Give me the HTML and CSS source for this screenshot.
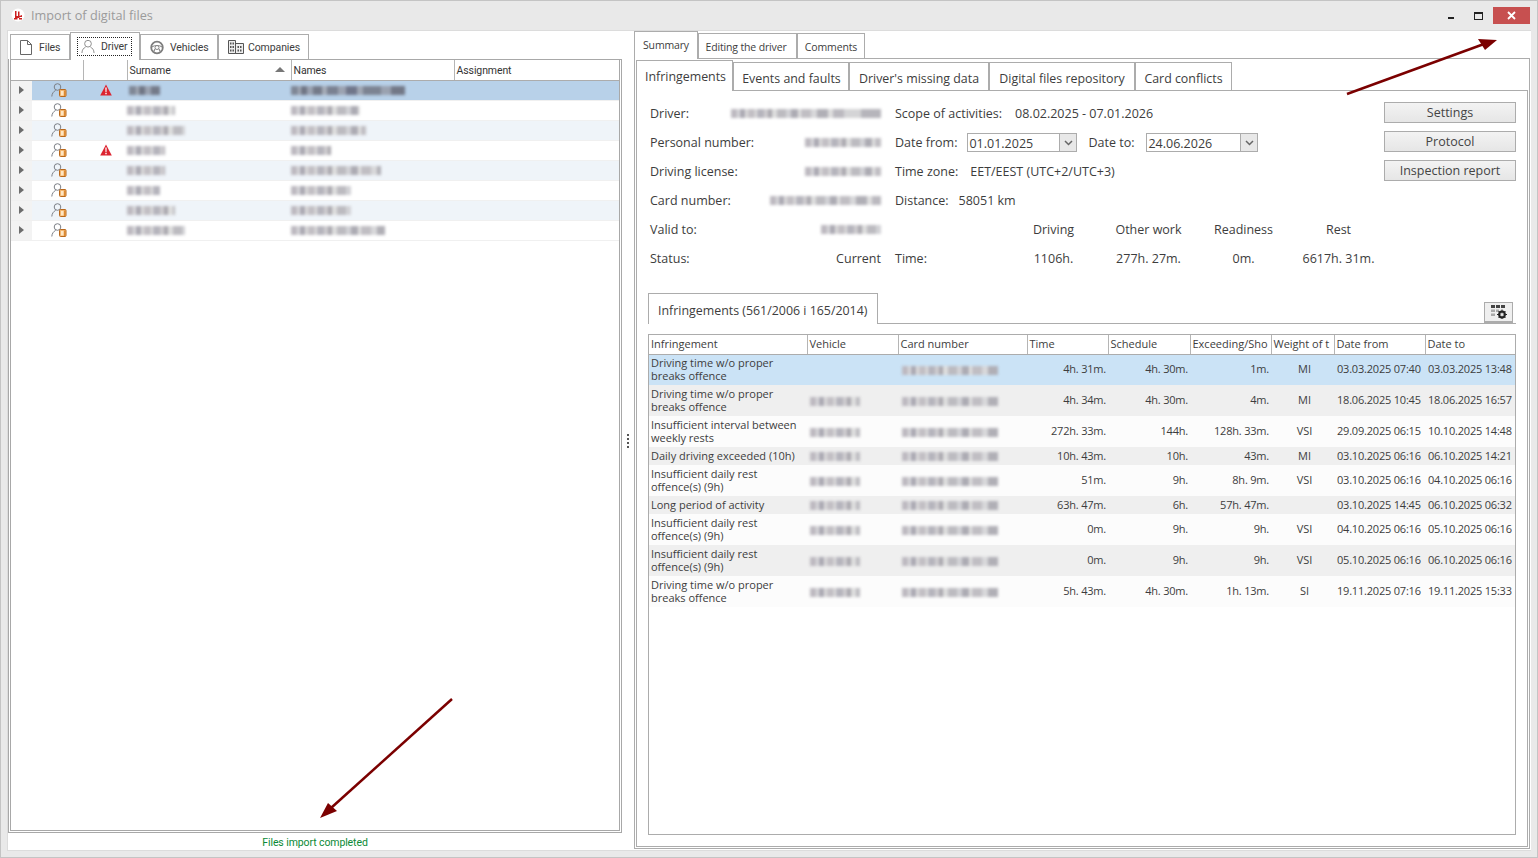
FILE: index.html
```html
<!DOCTYPE html>
<html lang="en">
<head>
    <meta charset="utf-8">
    <meta name="viewport" content="width=device-width, initial-scale=1">
    <link rel="stylesheet" href="styles.css">
    <title>Import of digital files</title>
</head>
<body>
    <svg class="defs" width="0" height="0">
        <symbol id="user-db" viewBox="0 0 16 14">
            <circle cx="6.500" cy="4" r="3.300" fill="none" stroke="#7c7f86" stroke-width="1"/>
            <path d="M0.800 13.500C1 10.500 2.500 8.500 4.600 7.400" fill="none" stroke="#7c7f86" stroke-width="1"/>
            <rect x="8.500" y="6.500" width="6.500" height="7" rx="1" fill="#f2b56f" stroke="#b9681c" stroke-width="1"/>
            <rect x="10" y="8" width="2.500" height="4.500" fill="#fde6c4"/>
            <rect x="13" y="7.500" width="1.300" height="5.500" fill="#de8a30"/>
        </symbol>
        <symbol id="warn" viewBox="0 0 12 12">
            <path d="M6 .5L11.800 11.500H.2z" fill="#dc2330"/>
            <path d="M5.300 3.600h1.400l-.2 4.400h-1zM5.300 8.800h1.400v1.400H5.300z" fill="#fff"/>
        </symbol>
    </svg>

    <div class="window">
        <div class="titlebar">
            <svg class="app-icon" viewBox="0 0 14 14">
                <circle cx="7" cy="7" r="6.500" fill="#fff"/>
                <path d="M4 3h1.500v5H7V3.500h1.500V8L11 7v2H8.500V10H11v1.500H8V10H6.500v1.500H3V10h1z" fill="#cc1f1f"/>
            </svg>
            <span class="title">Import of digital files</span>
            <div class="win-controls">
                <span class="win-min"></span>
                <span class="win-max"></span>
                <span class="win-close">
                    <svg viewBox="0 0 9 9" width="9" height="9"><path d="M1 1l7 7M8 1L1 8" stroke="#fff" stroke-width="1.800"/></svg>
                </span>
            </div>
        </div>

        <div class="content">
            <div class="left-pane">
                <div class="tabs left-tabs">
                    <div class="tab">
                        <svg class="tab-icon" viewBox="0 0 14 15"><path d="M1.500 .5h7l4 4v10h-11zM8.500 .5v4h4" fill="none" stroke="#666" stroke-width="1"/></svg>
                        Files
                    </div>
                    <div class="tab active">
                        <span class="focus">
                            <svg class="tab-icon" viewBox="0 0 15 15"><circle cx="7.500" cy="4.500" r="3.600" fill="none" stroke="#888" stroke-width="1"/><path d="M1 14.500c0-3.500 2-5.500 3.800-6.300M14 14.500c0-3.500-2-5.500-3.800-6.300" fill="none" stroke="#888" stroke-width="1"/></svg>
                            Driver
                        </span>
                    </div>
                    <div class="tab">
                        <svg class="tab-icon" viewBox="0 0 14 14"><circle cx="7" cy="7" r="5.800" fill="none" stroke="#7d7d7d" stroke-width="1.800"/><circle cx="7" cy="7" r="2" fill="none" stroke="#888" stroke-width="1"/><path d="M2 6.500C4 4.500 10 4.500 12 6.500M5 8.500l-1.500 3M9 8.500l1.500 3" fill="none" stroke="#888" stroke-width="1.200"/></svg>
                        Vehicles
                    </div>
                    <div class="tab">
                        <svg class="tab-icon wide" viewBox="0 0 16 14"><path d="M.5 .5h7v13h-7zM7.500 3.500h8v10h-8z" fill="#eee" stroke="#555" stroke-width="1"/><path d="M2 2.500h1.500v2H2zM4.500 2.500H6v2H4.500zM2 6h1.500v2H2zM4.500 6H6v2H4.500zM2 9.500h1.500v2H2zM4.500 9.500H6v2H4.500zM9.500 6h1.500v2H9.500zM12 6h1.500v2H12zM9.500 9.500h1.500v2H9.500zM12 9.500h1.500v2H12z" fill="#555"/></svg>
                        Companies
                    </div>
                </div>

                <div class="list-box">
                    <table class="drivers">
                        <colgroup>
                            <col class="c-arrow"><col class="c-icon"><col class="c-warn"><col class="c-name"><col class="c-name2"><col>
                        </colgroup>
                        <thead>
                            <tr>
                                <th colspan="2"></th>
                                <th></th>
                                <th class="sorted">Surname<span class="sort-up"></span></th>
                                <th>Names</th>
                                <th>Assignment</th>
                            </tr>
                        </thead>
                        <tbody>
                            <tr class="selected">
                                <td class="arrow-cell"><span class="arrow"></span></td>
                                <td class="icon-cell"><svg class="user-icon"><use href="#user-db"/></svg></td>
                                <td class="icon-cell"><svg class="warn-icon"><use href="#warn"/></svg></td>
                                <td><span class="blur dark w31"></span></td>
                                <td><span class="blur dark w114"></span></td>
                                <td></td>
                            </tr>
                            <tr>
                                <td class="arrow-cell"><span class="arrow"></span></td>
                                <td class="icon-cell"><svg class="user-icon"><use href="#user-db"/></svg></td>
                                <td></td>
                                <td><span class="blur w48"></span></td>
                                <td><span class="blur w69"></span></td>
                                <td></td>
                            </tr>
                            <tr class="alt">
                                <td class="arrow-cell"><span class="arrow"></span></td>
                                <td class="icon-cell"><svg class="user-icon"><use href="#user-db"/></svg></td>
                                <td></td>
                                <td><span class="blur w58"></span></td>
                                <td><span class="blur w75"></span></td>
                                <td></td>
                            </tr>
                            <tr>
                                <td class="arrow-cell"><span class="arrow"></span></td>
                                <td class="icon-cell"><svg class="user-icon"><use href="#user-db"/></svg></td>
                                <td class="icon-cell"><svg class="warn-icon"><use href="#warn"/></svg></td>
                                <td><span class="blur w38"></span></td>
                                <td><span class="blur w40"></span></td>
                                <td></td>
                            </tr>
                            <tr class="alt">
                                <td class="arrow-cell"><span class="arrow"></span></td>
                                <td class="icon-cell"><svg class="user-icon"><use href="#user-db"/></svg></td>
                                <td></td>
                                <td><span class="blur w38"></span></td>
                                <td><span class="blur w90"></span></td>
                                <td></td>
                            </tr>
                            <tr>
                                <td class="arrow-cell"><span class="arrow"></span></td>
                                <td class="icon-cell"><svg class="user-icon"><use href="#user-db"/></svg></td>
                                <td></td>
                                <td><span class="blur w33"></span></td>
                                <td><span class="blur w60"></span></td>
                                <td></td>
                            </tr>
                            <tr class="alt">
                                <td class="arrow-cell"><span class="arrow"></span></td>
                                <td class="icon-cell"><svg class="user-icon"><use href="#user-db"/></svg></td>
                                <td></td>
                                <td><span class="blur w48"></span></td>
                                <td><span class="blur w60"></span></td>
                                <td></td>
                            </tr>
                            <tr>
                                <td class="arrow-cell"><span class="arrow"></span></td>
                                <td class="icon-cell"><svg class="user-icon"><use href="#user-db"/></svg></td>
                                <td></td>
                                <td><span class="blur w58"></span></td>
                                <td><span class="blur w94"></span></td>
                                <td></td>
                            </tr>
                        </tbody>
                    </table>
                </div>
                <div class="status">Files import completed</div>
            </div>

            <div class="splitter"><span></span><span></span><span></span><span></span></div>

            <div class="right-pane">
                <div class="tabs right-tabs">
                    <div class="tab active">Summary</div>
                    <div class="tab">Editing the driver</div>
                    <div class="tab">Comments</div>
                </div>
                <div class="outer-box">
                    <div class="tabs inner-tabs">
                        <div class="tab active">Infringements</div>
                        <div class="tab">Events and faults</div>
                        <div class="tab">Driver's missing data</div>
                        <div class="tab">Digital files repository</div>
                        <div class="tab">Card conflicts</div>
                    </div>
                    <div class="inner-box">
                        <div class="summary">
                            <div class="facts">
                                <div class="fact"><span>Driver:</span><span class="blur w150"></span></div>
                                <div class="fact"><span>Personal number:</span><span class="blur w76"></span></div>
                                <div class="fact"><span>Driving license:</span><span class="blur w76"></span></div>
                                <div class="fact"><span>Card number:</span><span class="blur w111"></span></div>
                                <div class="fact"><span>Valid to:</span><span class="blur w60"></span></div>
                                <div class="fact"><span>Status:</span><span>Current</span></div>
                            </div>
                            <div class="scope">
                                <div class="scope-row"><span>Scope of activities:</span><span class="gap13">08.02.2025 - 07.01.2026</span></div>
                                <div class="scope-row">
                                    <span>Date from:</span>
                                    <div class="date-box date-from"><span class="date-val">01.01.2025</span><span class="date-btn"><svg viewBox="0 0 9 6" width="9" height="6"><path d="M1 1l3.500 3.500L8 1" fill="none" stroke="#666" stroke-width="1.500"/></svg></span></div>
                                    <span class="date-to-label">Date to:</span>
                                    <div class="date-box date-to"><span class="date-val">24.06.2026</span><span class="date-btn"><svg viewBox="0 0 9 6" width="9" height="6"><path d="M1 1l3.500 3.500L8 1" fill="none" stroke="#666" stroke-width="1.500"/></svg></span></div>
                                </div>
                                <div class="scope-row"><span>Time zone:</span><span class="gap12">EET/EEST (UTC+2/UTC+3)</span></div>
                                <div class="scope-row"><span>Distance:</span><span class="gap10">58051 km</span></div>
                                <div class="stats">
                                    <span></span><span>Driving</span><span>Other work</span><span>Readiness</span><span>Rest</span>
                                </div>
                                <div class="stats">
                                    <span class="stat-label">Time:</span><span>1106h.</span><span>277h. 27m.</span><span>0m.</span><span>6617h. 31m.</span>
                                </div>
                            </div>
                            <div class="actions">
                                <button class="btn">Settings</button>
                                <button class="btn">Protocol</button>
                                <button class="btn">Inspection report</button>
                            </div>
                        </div>

                        <div class="section-head">
                            <div class="section-tab">Infringements (561/2006 i 165/2014)</div>
                            <div class="grid-btn">
                                <svg viewBox="0 0 16 14" width="16" height="14">
                                    <path d="M0 0h4v3H0zM5 0h4v3H5zM10 0h4v3h-4z" fill="#444"/>
                                    <path d="M0 4.500h4v2.500H0zM5 4.500h3v2.500H5zM0 8.500h4V11H0z" fill="#aaa"/>
                                    <circle cx="11" cy="9.500" r="3" fill="none" stroke="#222" stroke-width="1.800"/>
                                    <path d="M11 4.500v10M6 9.500h10M7.500 6l7 7M14.500 6l-7 7" stroke="#222" stroke-width="1"/>
                                    <circle cx="11" cy="9.500" r="1.500" fill="#e8e8e8"/>
                                </svg>
                            </div>
                        </div>

                        <div class="table-box">
                            <table class="infringements">
                                <colgroup>
                                    <col class="i1"><col class="i2"><col class="i3"><col class="i4"><col class="i5"><col class="i6"><col class="i7"><col class="i8"><col>
                                </colgroup>
                                <thead>
                                    <tr>
                                        <th>Infringement</th><th>Vehicle</th><th>Card number</th><th>Time</th><th>Schedule</th><th>Exceeding/Sho</th><th>Weight of t</th><th>Date from</th><th>Date to</th>
                                    </tr>
                                </thead>
                                <tbody>
                                    <tr class="tall selected">
                                        <td class="wrap">Driving time w/o proper breaks offence</td><td></td><td><span class="blur card"></span></td><td class="num">4h. 31m.</td><td class="num">4h. 30m.</td><td class="num">1m.</td><td class="mid">MI</td><td>03.03.2025 07:40</td><td>03.03.2025 13:48</td>
                                    </tr>
                                    <tr class="tall alt">
                                        <td class="wrap">Driving time w/o proper breaks offence</td><td><span class="blur veh"></span></td><td><span class="blur card"></span></td><td class="num">4h. 34m.</td><td class="num">4h. 30m.</td><td class="num">4m.</td><td class="mid">MI</td><td>18.06.2025 10:45</td><td>18.06.2025 16:57</td>
                                    </tr>
                                    <tr class="tall">
                                        <td class="wrap">Insufficient interval between weekly rests</td><td><span class="blur veh"></span></td><td><span class="blur card"></span></td><td class="num">272h. 33m.</td><td class="num">144h.</td><td class="num">128h. 33m.</td><td class="mid">VSI</td><td>29.09.2025 06:15</td><td>10.10.2025 14:48</td>
                                    </tr>
                                    <tr class="short alt">
                                        <td>Daily driving exceeded (10h)</td><td><span class="blur veh"></span></td><td><span class="blur card"></span></td><td class="num">10h. 43m.</td><td class="num">10h.</td><td class="num">43m.</td><td class="mid">MI</td><td>03.10.2025 06:16</td><td>06.10.2025 14:21</td>
                                    </tr>
                                    <tr class="tall">
                                        <td class="wrap">Insufficient daily rest offence(s) (9h)</td><td><span class="blur veh"></span></td><td><span class="blur card"></span></td><td class="num">51m.</td><td class="num">9h.</td><td class="num">8h. 9m.</td><td class="mid">VSI</td><td>03.10.2025 06:16</td><td>04.10.2025 06:16</td>
                                    </tr>
                                    <tr class="short alt">
                                        <td>Long period of activity</td><td><span class="blur veh"></span></td><td><span class="blur card"></span></td><td class="num">63h. 47m.</td><td class="num">6h.</td><td class="num">57h. 47m.</td><td class="mid"></td><td>03.10.2025 14:45</td><td>06.10.2025 06:32</td>
                                    </tr>
                                    <tr class="tall">
                                        <td class="wrap">Insufficient daily rest offence(s) (9h)</td><td><span class="blur veh"></span></td><td><span class="blur card"></span></td><td class="num">0m.</td><td class="num">9h.</td><td class="num">9h.</td><td class="mid">VSI</td><td>04.10.2025 06:16</td><td>05.10.2025 06:16</td>
                                    </tr>
                                    <tr class="tall alt">
                                        <td class="wrap">Insufficient daily rest offence(s) (9h)</td><td><span class="blur veh"></span></td><td><span class="blur card"></span></td><td class="num">0m.</td><td class="num">9h.</td><td class="num">9h.</td><td class="mid">VSI</td><td>05.10.2025 06:16</td><td>06.10.2025 06:16</td>
                                    </tr>
                                    <tr class="tall">
                                        <td class="wrap">Driving time w/o proper breaks offence</td><td><span class="blur veh"></span></td><td><span class="blur card"></span></td><td class="num">5h. 43m.</td><td class="num">4h. 30m.</td><td class="num">1h. 13m.</td><td class="mid">SI</td><td>19.11.2025 07:16</td><td>19.11.2025 15:33</td>
                                    </tr>
                                </tbody>
                            </table>
                        </div>
                    </div>
                </div>
            </div>
        </div>
    </div>

    <!-- the two annotation arrows drawn over the screenshot -->
    <svg class="arrows" width="1538" height="858" viewBox="0 0 1538 858">
        <path d="M1347 94L1484 44" stroke="#7b0000" stroke-width="2.500"/>
        <path d="M1497 40L1478 39L1485 50z" fill="#7b0000"/>
        <path d="M452 699L331 808" stroke="#7b0000" stroke-width="2.500"/>
        <path d="M320 818L328 803L337 811z" fill="#7b0000"/>
    </svg>
</body>
</html>
```

FILE: styles.css
```css
* { margin: 0; padding: 0; box-sizing: border-box; }
html, body { height: 100%; width: 100%; overflow: hidden; }
body { background: #e9e9e9; color: #3d3d3d; font-family: "Open Sans", "Noto Sans", sans-serif; font-size: 12px; position: relative; }
.defs { position: absolute; }

.window { height: 100%; display: flex; flex-direction: column; border: 1px solid #c4c4c4; }
.titlebar { height: 29px; flex: none; display: flex; align-items: center; padding: 0 0 2px 10px; }
.app-icon { width: 14px; height: 14px; }
.title { margin-left: 6px; font-size: 12.700px; color: #9b9b9b; }
.win-controls { margin-left: auto; display: flex; align-items: flex-start; height: 27px; padding-top: 6px; margin-right: 7px; }
.win-min { width: 6px; height: 2px; background: #222; margin-top: 10px; margin-right: 20px; }
.win-max { width: 9px; height: 8px; border: 1px solid #222; border-top-width: 2px; margin-top: 5px; margin-right: 10px; }
.win-close { width: 37px; height: 17px; background: #c75050; display: flex; align-items: center; justify-content: center; }

.content { flex: 1; min-height: 0; display: flex; margin: 0 6px 6px 6px; background: #fff; border: 1px solid #dcdcdc; border-right: 0; }

/* tabs */
.tabs { display: flex; align-items: flex-end; }
.tab { display: flex; align-items: center; border: 1px solid #acacac; border-bottom: 0; background: #fff; white-space: nowrap; }
.tab-icon { width: 14px; height: 15px; margin-right: 6px; flex: none; }
.tab-icon.wide { width: 16px; height: 14px; margin-right: 4px; }

.left-pane { width: 614px; flex: none; display: flex; flex-direction: column; }
.left-tabs { height: 28px; padding-left: 2px; font-family: Roboto, sans-serif; font-size: 10.500px; letter-spacing: -.1px; flex: none; }
.left-tabs .tab { height: 25px; padding: 0 0 0 9px; }
.left-tabs .tab:nth-child(1) { width: 60px; padding-left: 8px; }
.left-tabs .tab:nth-child(2) { width: 70px; height: 28px; position: relative; z-index: 1; margin-bottom: -1px; padding: 0 6px; }
.left-tabs .tab:nth-child(3) { width: 78px; }
.left-tabs .tab:nth-child(4) { width: 91px; }
.focus { display: flex; align-items: center; border: 1px dotted #222; height: 19px; width: 55px; padding-left: 3px; }
.focus .tab-icon { margin-right: 6px; }

.list-box { flex: 1; min-height: 0; border: 3px double #a8a8a8; border-top: 1px solid #a8a8a8; }
.drivers { width: 100%; table-layout: fixed; border-collapse: collapse; font-family: Roboto, sans-serif; font-size: 10.500px; letter-spacing: -.1px; }
.c-arrow { width: 21px; }
.c-icon { width: 51px; }
.c-warn { width: 44px; }
.c-name { width: 164px; }
.c-name2 { width: 163px; }
.drivers th { height: 20px; font-weight: 400; text-align: left; padding: 1px 0 0 2px; border-right: 1px solid #b5b5b5; border-bottom: 1px solid #acacac; color: #333; position: relative; }
.drivers th:last-child { border-right: 0; }
.sort-up { position: absolute; right: 6px; top: 7px; border: 5px solid transparent; border-top: 0; border-bottom: 5px solid #777; }
.drivers td { height: 20px; border-bottom: 1px solid #f0f0f0; padding: 0; line-height: 0; vertical-align: middle; }
.drivers .alt td { background: #eff4f9; }
.drivers .selected td { background: #b8d1e9; }
.drivers td.arrow-cell { background: #f3f3f3; text-align: center; }
.arrow { display: inline-block; border: 4px solid transparent; border-left: 5px solid #6d6d6d; border-right: 0; }
.drivers td.icon-cell { padding-left: 2px; }
.user-icon { width: 16px; height: 14px; display: block; margin: 0 auto; }
.warn-icon { width: 12px; height: 12px; display: block; margin: 0 auto; }
.status { height: 17px; flex: none; text-align: center; color: #0a8a36; font-family: Roboto, sans-serif; font-size: 10.500px; letter-spacing: -.1px; line-height: 19px; }

/* blurred personal data */
.blur { display: inline-block; height: 9px; vertical-align: middle; filter: blur(1.500px); background: linear-gradient(90deg, #bdb9c0 0 6px, #d9d9dc 6px 9px, #aaa8b2 9px 14px, #dcdcdc 14px 17px, #c2bfc4 17px 24px, #e4e4e4 24px 26px, #b5b4bc 26px 33px, #cfcdd0 33px 37px, #a9a7ae 37px 41px, #dedede 41px 46px, #bcbbc0 46px 55px, #d2d2d6 55px 60px, #acabb3 60px 67px, #e2e2e2 67px 70px, #c0bec3 70px 80px, #d8d8da 80px 86px, #b0afb6 86px 97px, #dfdfdf 97px 102px, #bbb9bf 102px 113px, #d4d4d6 113px 130px, #b6b5bb 130px); }
.blur.dark { background: linear-gradient(90deg, #7f8796 0 7px, #a3aab6 7px 10px, #6f7584 10px 16px, #9aa2b0 16px 22px, #747a89 22px 31px, #a5acb8 31px 36px, #7a8191 36px 47px, #9ca3b1 47px 55px, #70768a 55px 66px, #a0a7b4 66px 72px, #7c8392 72px 90px, #9aa2b0 90px 100px, #727887 100px); }
.w31 { width: 31px; margin-left: 2px; }
.w33 { width: 33px; }
.w38 { width: 38px; }
.w40 { width: 40px; }
.w48 { width: 48px; }
.w58 { width: 58px; }
.w60 { width: 60px; }
.w69 { width: 69px; }
.w75 { width: 75px; }
.w76 { width: 76px; }
.w90 { width: 90px; }
.w94 { width: 94px; }
.w111 { width: 111px; }
.w114 { width: 114px; }
.w150 { width: 150px; }

.splitter { width: 12px; flex: none; display: flex; flex-direction: column; align-items: center; justify-content: center; gap: 2px; }
.splitter span { width: 2px; height: 2px; background: #555; }

.right-pane { flex: 1; min-width: 0; display: flex; flex-direction: column; margin-right: 1px; }
.right-tabs { height: 27px; flex: none; position: relative; font-size: 10.500px; letter-spacing: -.15px; }
.right-tabs .tab { height: 25px; justify-content: center; padding-top: 1px; }
.right-tabs .tab:nth-child(1) { width: 64px; height: 28px; z-index: 1; margin-bottom: -1px; padding: 0 0 1px; }
.right-tabs .tab:nth-child(2) { width: 99px; padding-right: 3px; }
.right-tabs .tab:nth-child(3) { width: 68px; }
.outer-box { flex: 1; min-height: 0; border: 1px solid #acacac; padding: 0 1px 1px 1px; margin-bottom: 1px; display: flex; flex-direction: column; }

.inner-tabs { height: 31px; flex: none; position: relative; font-size: 12.400px; }
.inner-tabs .tab { height: 28px; justify-content: center; padding-top: 3px; }
.inner-tabs .tab:nth-child(1) { width: 97px; height: 31px; z-index: 1; margin-bottom: -1px; padding: 1px 0 0 2px; }
.inner-tabs .tab:nth-child(2) { width: 116px; padding-left: 1px; }
.inner-tabs .tab:nth-child(3) { width: 140px; }
.inner-tabs .tab:nth-child(4) { width: 146px; }
.inner-tabs .tab:nth-child(5) { width: 97px; }
.inner-box { flex: 1; min-height: 0; border: 1px solid #acacac; padding: 8px 11px 11px 11px; display: flex; flex-direction: column; }

.summary { display: flex; font-size: 12.500px; padding-left: 2px; flex: none; }
.facts { width: 231px; flex: none; }
.fact { height: 29px; display: flex; align-items: center; justify-content: space-between; }
.scope { flex: 1; min-width: 0; margin-left: 14px; }
.scope-row { height: 29px; display: flex; align-items: center; }
.gap10 { margin-left: 10px; }
.gap12 { margin-left: 12px; }
.gap13 { margin-left: 13px; }
.date-box { height: 19px; display: flex; border: 1px solid #acacac; margin-left: 10px; }
.date-from { width: 110px; }
.date-to { width: 112px; margin-left: 12px; }
.date-val { flex: 1; padding-left: 1px; line-height: 19px; }
.date-btn { width: 17px; background: #e8e8e8; border-left: 1px solid #acacac; display: flex; align-items: center; justify-content: center; }
.date-to-label { margin-left: 11px; }
.stats { height: 29px; display: grid; grid-template-columns: 111px 95px 95px 95px 95px; align-items: center; text-align: center; }
.stat-label { text-align: left; }
.actions { width: 132px; flex: none; margin-top: 3px; display: flex; flex-direction: column; gap: 8px; }
.btn { height: 21px; border: 1px solid #acacac; background: linear-gradient(#f3f3f3, #e6e6e6); font: inherit; color: #444; }

.section-head { height: 31px; flex: none; margin-top: 20px; display: flex; align-items: flex-end; justify-content: space-between; border-bottom: 1px solid #acacac; }
.section-tab { width: 230px; height: 31px; border: 1px solid #acacac; border-bottom: 0; background: #fff; margin-bottom: -1px; padding-left: 9px; font-size: 12.400px; line-height: 34px; }
.grid-btn { width: 29px; height: 21px; margin-right: 3px; background: #efefef; border: 1px solid #acacac; border-bottom: 2px solid #acacac; display: flex; align-items: center; justify-content: center; }

.table-box { flex: 1; min-height: 0; margin-top: 10px; border: 1px solid #acacac; }
.infringements { width: 100%; table-layout: fixed; border-collapse: collapse; font-size: 11px; }
.i1 { width: 158px; }
.i2 { width: 91px; }
.i3 { width: 129px; }
.i4 { width: 81px; }
.i5 { width: 82px; }
.i6 { width: 81px; }
.i7 { width: 63px; }
.i8 { width: 91px; }
.infringements th { height: 19px; font-weight: 400; text-align: left; padding: 0 0 2px 2px; border-right: 1px solid #b5b5b5; border-bottom: 1px solid #acacac; overflow: hidden; white-space: nowrap; }
.infringements th:last-child { border-right: 0; }
.infringements td { padding: 0 2px 2px; line-height: 13px; white-space: nowrap; background: #fcfcfc; vertical-align: middle; overflow: hidden; }
.infringements td.wrap { white-space: normal; }
.infringements tr.alt td { background: #efefef; }
.infringements tr.selected td { background: #cbe3f6; }
.infringements .tall { height: 31px; }
.infringements .short { height: 18px; }
.infringements .num { text-align: right; letter-spacing: -.2px; }
.infringements .mid { text-align: center; padding-left: 6px; }
.infringements td:nth-child(n+8) { padding-left: 3px; letter-spacing: -.2px; }
.blur.veh { width: 50px; margin-left: 1px; }
.blur.card { width: 96px; margin-left: 2px; }

.arrows { position: absolute; left: 0; top: 0; pointer-events: none; }
```
